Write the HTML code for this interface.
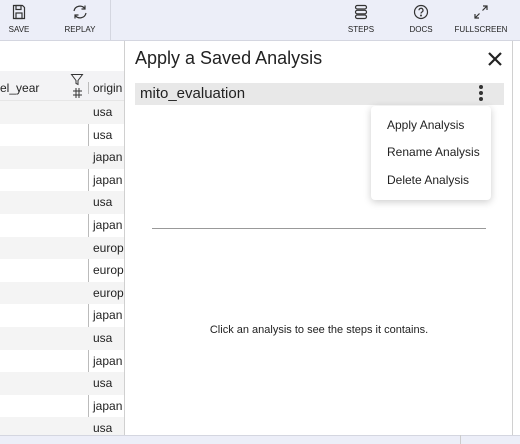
<!DOCTYPE html>
<html><head><style>
*{margin:0;padding:0;box-sizing:border-box}
body{width:520px;height:444px;overflow:hidden;background:#fff;font-family:"Liberation Sans",sans-serif;position:relative}
.tb{position:absolute;left:0;top:0;width:520px;height:41px;background:#eceef8;border-bottom:1px solid #d4d6e0}
.tbi{position:absolute;top:4px;width:60px;text-align:center;font-size:8px;color:#222;transform:translateX(-50%)}
.tbi svg{display:block;margin:0 auto 5px}
.row{position:absolute;left:0;width:124px;height:22.6px;font-size:12px;color:#222}
.row span{position:absolute;left:93px;top:4px}
</style></head><body>
<div class="tb">
 <div style="position:absolute;left:110px;top:0;width:1px;height:41px;background:#d4d6e0"></div>
 <div class="tbi" style="left:19px"><svg width="14" height="16" viewBox="0 0 14 16" fill="none" stroke="#333" stroke-width="1.2"><path d="M1.5 1.5h9l2 2v11h-11z"/><rect x="4" y="1.5" width="5" height="4"/><rect x="4" y="9" width="6" height="5.5"/></svg>SAVE</div>
 <div class="tbi" style="left:80px"><svg width="18" height="16" viewBox="0 0 18 16" fill="none" stroke="#333" stroke-width="1.2"><path d="M3 7a6 6 0 0 1 11-2M15 9a6 6 0 0 1-11 2"/><path d="M14 1.5v3.5h-3.5M4 14.5V11h3.5"/></svg>REPLAY</div>
 <div class="tbi" style="left:361px"><svg width="14" height="16" viewBox="0 0 14 16" fill="none" stroke="#333" stroke-width="1.2"><rect x="1.5" y="1.5" width="11" height="3.5" rx="1.7"/><rect x="1.5" y="6.3" width="11" height="3.5" rx="1.7"/><rect x="1.5" y="11" width="11" height="3.5" rx="1.7"/></svg>STEPS</div>
 <div class="tbi" style="left:421px"><svg width="16" height="16" viewBox="0 0 16 16" fill="none" stroke="#333" stroke-width="1.2"><circle cx="8" cy="8" r="6.5"/><path d="M6 6.3a2 2 0 1 1 2.8 1.8c-.6.3-.8.7-.8 1.4"/><circle cx="8" cy="11.5" r=".4" fill="#333"/></svg>DOCS</div>
 <div class="tbi" style="left:481px"><svg width="16" height="16" viewBox="0 0 16 16" fill="none" stroke="#333" stroke-width="1.2"><path d="M9.5 6.5L14 2M10 2h4v4M6.5 9.5L2 14M2 10v4h4"/></svg>FULLSCREEN</div>
</div>
<div style="position:absolute;left:0;top:71px;width:124px;height:30px;background:#f3f3f5;border-bottom:1px solid #e6e6e6"></div>
<div style="position:absolute;left:0;top:81px;font-size:12px;color:#222">el_year</div>
<svg style="position:absolute;left:70px;top:73px" width="14" height="26" viewBox="0 0 14 26" fill="none" stroke="#333" stroke-width="1"><path d="M1.5 1.5h11l-4.5 6v4l-2-1v-3z"/><path d="M3 18h9M3 22h9M6 15v10M9 15v10"/></svg>
<div style="position:absolute;left:93px;top:81px;font-size:12px;color:#222">origin</div>
<div style="position:absolute;left:88px;top:82px;width:1px;height:12px;background:#bbb"></div>
<div style="position:absolute;left:88px;top:107px;width:1px;height:330px;background:#bbb"></div>
<div class="row" style="top:101px;background:#f4f4f4"><span>usa</span></div>
<div class="row" style="top:123.6px"><span>usa</span></div>
<div class="row" style="top:146.2px;background:#f4f4f4"><span>japan</span></div>
<div class="row" style="top:168.8px"><span>japan</span></div>
<div class="row" style="top:191.4px;background:#f4f4f4"><span>usa</span></div>
<div class="row" style="top:214px"><span>japan</span></div>
<div class="row" style="top:236.6px;background:#f4f4f4"><span>europe</span></div>
<div class="row" style="top:259.2px"><span>europe</span></div>
<div class="row" style="top:281.8px;background:#f4f4f4"><span>europe</span></div>
<div class="row" style="top:304.4px"><span>japan</span></div>
<div class="row" style="top:327px;background:#f4f4f4"><span>usa</span></div>
<div class="row" style="top:349.6px"><span>japan</span></div>
<div class="row" style="top:372.2px;background:#f4f4f4"><span>usa</span></div>
<div class="row" style="top:394.8px"><span>japan</span></div>
<div class="row" style="top:417.4px;background:#f4f4f4"><span>usa</span></div>
<div style="position:absolute;left:124px;top:41px;width:389px;height:394px;background:#fff;border-left:1px solid #d0d0d0;border-right:1px solid #d0d0d0;overflow:hidden">
 <div style="position:absolute;left:10px;top:7px;font-size:18px;color:#222">Apply a Saved Analysis</div>
 <svg style="position:absolute;left:362px;top:10px" width="16" height="16" viewBox="0 0 16 16" stroke="#222" stroke-width="2.2"><path d="M2 2l12 12M14 2L2 14"/></svg>
 <div style="position:absolute;left:10px;top:42px;width:369px;height:22px;background:#e8e8e8"></div>
 <div style="position:absolute;left:15px;top:44px;font-size:15px;color:#222">mito_evaluation</div>
 <div style="position:absolute;left:354px;top:44px;width:4px">
  <div style="width:4px;height:4px;border-radius:2px;background:#333;margin-bottom:2px"></div><div style="width:4px;height:4px;border-radius:2px;background:#333;margin-bottom:2px"></div><div style="width:4px;height:4px;border-radius:2px;background:#333"></div></div>
 <div style="position:absolute;left:246px;top:65px;width:120px;height:94px;background:#fff;border-radius:4px;box-shadow:0 2px 8px rgba(0,0,0,.2);font-size:12px;color:#222">
  <div style="position:absolute;left:16px;top:12px">Apply Analysis</div>
  <div style="position:absolute;left:16px;top:39px">Rename Analysis</div>
  <div style="position:absolute;left:16px;top:67px">Delete Analysis</div>
 </div>
 <div style="position:absolute;left:27px;top:187px;width:334px;height:1px;background:#999"></div>
 <div style="position:absolute;left:0;top:283px;width:388px;text-align:center;font-size:11px;color:#222">Click an analysis to see the steps it contains.</div>
</div>
<div style="position:absolute;left:0;top:435px;width:520px;height:9px;background:#eceef8;border-top:1px solid #d4d6e0"></div>
<div style="position:absolute;left:460px;top:435px;width:1px;height:9px;background:#ccc"></div>
</body></html>
